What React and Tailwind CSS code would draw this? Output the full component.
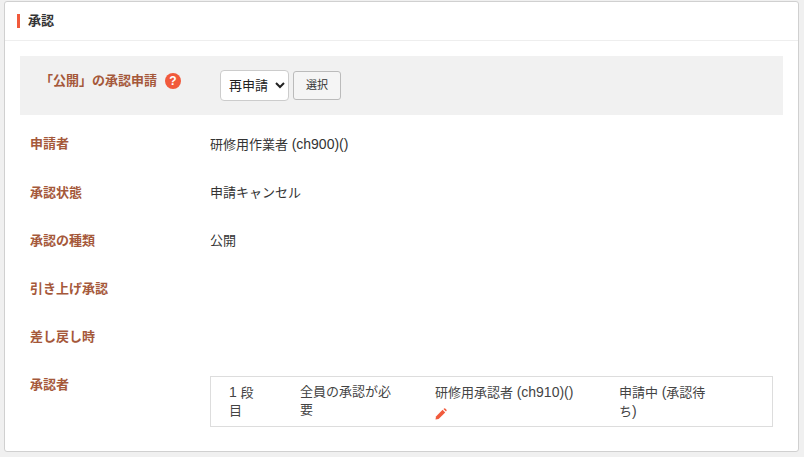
import React from "react";

const rows = [
  { label: "申請者", value: <>研修用作業者 <span className="text-[14px]">(ch900)()</span></> },
  { label: "承認状態", value: "申請キャンセル" },
  { label: "承認の種類", value: "公開" },
  { label: "引き上げ承認", value: "" },
  { label: "差し戻し時", value: "" },
];

const font = "font-['Liberation_Sans','Noto_Sans_CJK_JP',sans-serif]";

const PencilIcon = () => (
  <svg width="12" height="12" viewBox="0 0 12 12" className="block">
    <path d="M0.5 11.5 L1 8.4 L7.6 1.8 L10.2 4.4 L3.6 11 Z" fill="#f15a3c" />
    <path d="M8.4 1 L9.2 0.4 Q9.7 0.1 10.2 0.5 L11.5 1.8 Q11.9 2.3 11.5 2.8 L11 3.6 Z" fill="#f15a3c" />
  </svg>
);

const App = () => {
  return (
    <div className={`h-[457px] overflow-hidden bg-[#f0f0f0] pt-px pl-1 pr-[5px] ${font} text-[13px] text-[#333]`}>
      <div className="h-[451px] rounded-[3px] border border-[#d0d0d0] bg-white">
        {/* Header */}
        <div className="flex h-[39px] items-center border-b border-[#eeeeee] pl-3">
          <span className="h-[14px] w-[3px] bg-[#f15a3c]" />
          <h2 className="ml-2 text-[13px] font-bold text-[#333]">承認</h2>
        </div>

        <div className="pl-[15px] pr-[15px] pt-[15px]">
          {/* Request box */}
          <div className="flex h-[59px] bg-[#f1f1f1]">
            <div className="flex w-[200px] items-start justify-end pt-[15px]">
              <span className="text-[13px] font-bold leading-[20px] text-[#a5583a]">「公開」の承認申請</span>
              <span className="ml-2 mr-[39px] mt-[2px] flex h-4 w-4 items-center justify-center rounded-full bg-[#f15a3c] text-[12px] font-bold leading-none text-white">?</span>
            </div>
            <div className="flex items-start gap-1 pt-[14px]">
              <select className="h-[31px] w-[69px] rounded-[4px] border border-[#cccccc] bg-white pl-1 text-[13px] text-[#222]" defaultValue="再申請">
                <option>再申請</option>
              </select>
              <button className="mt-px h-[29px] w-12 rounded-[3px] border border-[#bbbbbb] bg-[#f5f5f5] text-[11px] text-[#333]">選択</button>
            </div>
          </div>

          {/* Detail rows */}
          <div className="pt-[5px]">
            {rows.map((row, index) => (
              <div key={row.label} className={`flex items-start pt-[14px] leading-[20px] ${index === 0 ? "h-[49px]" : "h-12"}`}>
                <div className="w-[190px] pl-[10px] font-bold text-[#a5583a]">{row.label}</div>
                <div className="text-[#333]">{row.value}</div>
              </div>
            ))}
            <div className="flex items-start pt-[11px]">
              <div className="w-[190px] pl-[10px] pt-[3px] font-bold leading-[20px] text-[#a5583a]">承認者</div>
              <div className="mt-1 grid h-[51px] w-[563px] grid-cols-[89px_135px_184px_1fr] border border-[#dddddd] pt-[6px] leading-[18px] text-[#444]">
                <div className="box-content w-[30px] pl-[18px]"><span className="text-[14px]">1</span> 段目</div>
                <div className="w-[95px]">全員の承認が必要</div>
                <div>
                  研修用承認者 <span className="text-[14px]">(ch910)()</span>
                  <div className="pt-[6px]"><PencilIcon /></div>
                </div>
                <div className="w-[90px]">申請中 <span className="text-[14px]">(</span>承認待ち<span className="text-[14px]">)</span></div>
              </div>
            </div>
          </div>
        </div>
      </div>
    </div>
  );
};

export default App;
